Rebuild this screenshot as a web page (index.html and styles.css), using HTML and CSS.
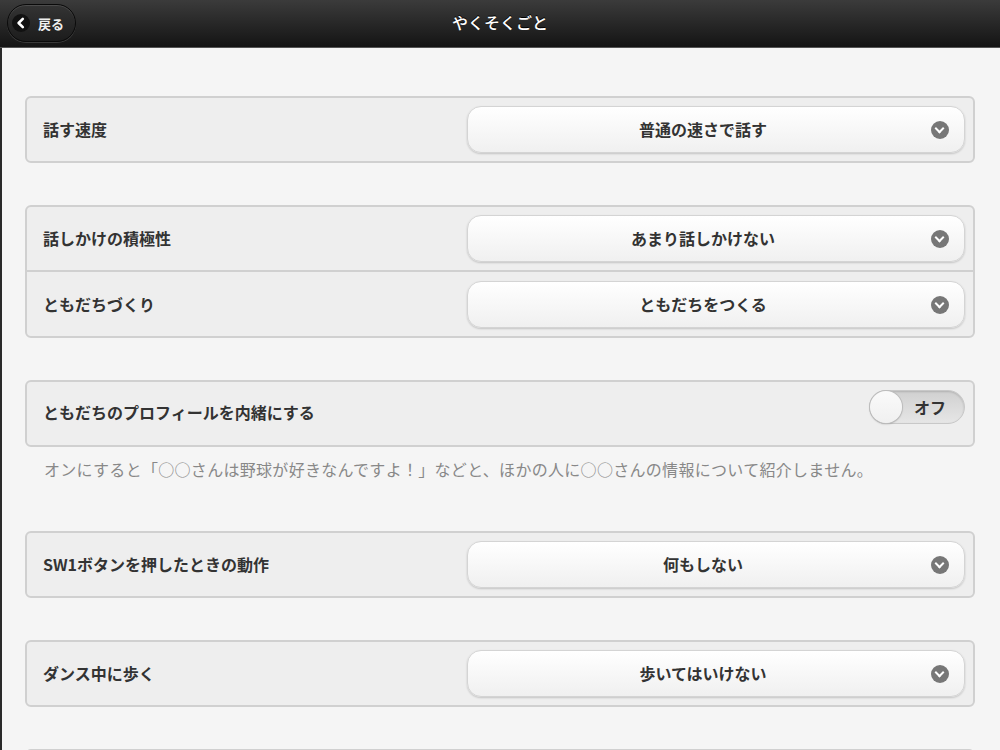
FILE: index.html
```html
<!DOCTYPE html>
<html lang="ja">
<head>
<meta charset="utf-8">
<title>やくそくごと</title>
<link rel="stylesheet" href="styles.css">
</head>
<body>
<header class="topbar">
  <button class="back">
    <span class="back-icon"><svg viewBox="0 0 18 18" width="18" height="18"><circle cx="9" cy="9" r="9" fill="#111"/><path d="M10.8 4.8 L6.6 9 L10.8 13.2" fill="none" stroke="#fff" stroke-width="2.6" stroke-linecap="round" stroke-linejoin="round"/></svg></span>
    <span class="back-label">戻る</span>
  </button>
  <h1 class="title">やくそくごと</h1>
</header>
<main class="content">
  <section class="group">
    <div class="row">
      <span class="label">話す速度</span>
      <div class="select"><span class="select-text">普通の速さで話す</span><span class="arrow"></span></div>
    </div>
  </section>

  <section class="group">
    <div class="row">
      <span class="label">話しかけの積極性</span>
      <div class="select"><span class="select-text">あまり話しかけない</span><span class="arrow"></span></div>
    </div>
    <div class="row">
      <span class="label">ともだちづくり</span>
      <div class="select"><span class="select-text">ともだちをつくる</span><span class="arrow"></span></div>
    </div>
  </section>

  <section class="group group-toggle">
    <div class="row">
      <span class="label label-toggle">ともだちのプロフィールを内緒にする</span>
      <div class="toggle"><span class="knob"></span><span class="toggle-text">オフ</span></div>
    </div>
  </section>
  <p class="help">オンにすると「○○さんは野球が好きなんですよ！」などと、ほかの人に○○さんの情報について紹介しません。</p>

  <section class="group">
    <div class="row">
      <span class="label">SW1ボタンを押したときの動作</span>
      <div class="select"><span class="select-text">何もしない</span><span class="arrow"></span></div>
    </div>
  </section>

  <section class="group">
    <div class="row">
      <span class="label">ダンス中に歩く</span>
      <div class="select"><span class="select-text">歩いてはいけない</span><span class="arrow"></span></div>
    </div>
  </section>

  <section class="group group-empty"></section>
</main>
</body>
</html>
```
FILE: styles.css
```css
html, body {
  margin: 0;
  padding: 0;
  height: 100%;
  overflow: hidden;
  background: #f5f5f5;
  font-family: "Noto Sans CJK JP", "Noto Sans", sans-serif;
  color: #333;
}

.topbar {
  height: 47px;
  border-bottom: 1px solid #555;
  background: linear-gradient(#3b3b3b, #141414);
  display: flex;
  align-items: center;
  justify-content: center;
  position: relative;
}

.title {
  margin: 0;
  font-size: 16px;
  font-weight: 500;
  color: #fff;
  text-shadow: 0 -1px 0 #000;
  line-height: 1;
  margin-top: -4px;
}

.back {
  position: absolute;
  left: 7px;
  top: 4px;
  height: 38px;
  width: 69px;
  box-sizing: border-box;
  border-radius: 19px;
  border: 1px solid #0a0a0a;
  box-shadow: inset 0 1px 0 rgba(255,255,255,0.12), 0 1px 0 rgba(255,255,255,0.15);
  background: linear-gradient(#343434, #1c1c1c);
  display: flex;
  align-items: center;
  padding: 0 0 0 4px;
  gap: 8px;
  font-family: inherit;
  cursor: pointer;
}

.back-icon {
  display: flex;
  width: 18px;
  height: 18px;
}

.back-label {
  color: #eee;
  font-size: 13px;
  font-weight: 700;
  line-height: 1;
}

.content {
  border-left: 2px solid #2a2a2a;
  height: 100%;
  box-sizing: border-box;
  padding: 48px 25px 0 23px;
  display: flex;
  flex-direction: column;
}

.group {
  border: 2px solid #d0d0d0;
  border-radius: 6px;
  background: #eeeeee;
  margin-bottom: 42px;
  flex-shrink: 0;
}

.group-empty {
  height: 63px;
}

.row {
  height: 63px;
  display: flex;
  align-items: flex-start;
  justify-content: space-between;
  padding: 8px 8px 0 16px;
  box-sizing: border-box;
}

.row + .row {
  border-top: 2px solid #d0d0d0;
  height: 66px;
  padding-top: 9px;
}

.label {
  font-size: 16px;
  font-weight: 700;
  color: #333;
  line-height: 1;
  margin-top: 15px;
}

.select {
  width: 498px;
  height: 47px;
  box-sizing: border-box;
  border: 1px solid #d4d4d4;
  border-radius: 14px;
  background: linear-gradient(#ffffff, #f0f0f0);
  box-shadow: 0 1px 2px rgba(0,0,0,0.18);
  display: flex;
  align-items: center;
  position: relative;
  padding-right: 26px;
}

.select-text {
  flex: 1;
  text-align: center;
  font-size: 16px;
  font-weight: 700;
  color: #333;
  line-height: 1;
  margin-top: -1px;
}

.arrow {
  position: absolute;
  right: 15px;
  top: 14px;
  width: 18px;
  height: 18px;
  border-radius: 50%;
  background: #777;
}

.arrow::after {
  content: "";
  position: absolute;
  left: 5px;
  top: 3.5px;
  width: 5px;
  height: 5px;
  border-right: 2.5px solid #fff;
  border-bottom: 2.5px solid #fff;
  transform: rotate(45deg);
}

.group-toggle {
  margin-bottom: 0;
}

.label-toggle {
  margin-top: 14px;
}

.toggle {
  width: 96px;
  height: 34px;
  box-sizing: border-box;
  border-radius: 17px;
  border: 1px solid #c8c8c8;
  background: linear-gradient(#d0d0d0, #e6e6e6);
  box-shadow: inset 0 1px 2px rgba(0,0,0,0.15);
  position: relative;
  display: flex;
  align-items: center;
}

.knob {
  position: absolute;
  left: 0;
  top: 0;
  width: 32px;
  height: 32px;
  border-radius: 50%;
  background: linear-gradient(#fafafa, #f0f0f0);
  box-shadow: 0 0 0 1px #bdbdbd, 0 1px 2px rgba(0,0,0,0.3);
}

.toggle-text {
  margin-left: 44px;
  font-size: 16px;
  font-weight: 700;
  color: #333;
  line-height: 1;
}

.help {
  margin: 11px 0 51px 19px;
  font-size: 16px;
  letter-spacing: 0.3px;
  color: #888;
  line-height: 22px;
  flex-shrink: 0;
}
```
